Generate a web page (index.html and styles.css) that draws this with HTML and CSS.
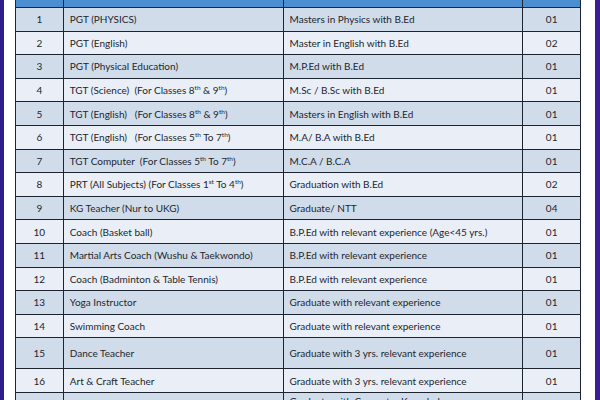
FILE: index.html
```html
<!DOCTYPE html>
<html>
<head>
<meta charset="utf-8">
<link rel="stylesheet" href="styles.css">
</head>
<body>
<div class="frame">
  <table class="posts">
    <colgroup>
      <col class="c-no"><col class="c-post"><col class="c-qual"><col class="c-num">
    </colgroup>
    <thead>
      <tr class="head"><th></th><th></th><th></th><th></th></tr>
    </thead>
    <tbody>
      <tr><td class="n">1</td><td>PGT (PHYSICS)</td><td>Masters in Physics with B.Ed</td><td class="n">01</td></tr>
      <tr><td class="n">2</td><td>PGT (English)</td><td>Master in English with B.Ed</td><td class="n">02</td></tr>
      <tr><td class="n">3</td><td>PGT (Physical Education)</td><td>M.P.Ed with B.Ed</td><td class="n">01</td></tr>
      <tr><td class="n">4</td><td>TGT (Science)&nbsp; (For Classes 8<sup>th</sup> &amp; 9<sup>th</sup>)</td><td>M.Sc / B.Sc with B.Ed</td><td class="n">01</td></tr>
      <tr><td class="n">5</td><td>TGT (English)&nbsp;&nbsp; (For Classes 8<sup>th</sup> &amp; 9<sup>th</sup>)</td><td>Masters in English with B.Ed</td><td class="n">01</td></tr>
      <tr><td class="n">6</td><td>TGT (English)&nbsp;&nbsp; (For Classes 5<sup>th</sup> To 7<sup>th</sup>)</td><td>M.A/ B.A with B.Ed</td><td class="n">01</td></tr>
      <tr><td class="n">7</td><td>TGT Computer&nbsp; (For Classes 5<sup>th</sup> To 7<sup>th</sup>)</td><td>M.C.A / B.C.A</td><td class="n">01</td></tr>
      <tr><td class="n">8</td><td>PRT (All Subjects) (For Classes 1<sup>st</sup> To 4<sup>th</sup>)</td><td>Graduation with B.Ed</td><td class="n">02</td></tr>
      <tr><td class="n">9</td><td>KG Teacher (Nur to UKG)</td><td>Graduate/ NTT</td><td class="n">04</td></tr>
      <tr><td class="n">10</td><td>Coach (Basket ball)</td><td>B.P.Ed with relevant experience (Age&lt;45 yrs.)</td><td class="n">01</td></tr>
      <tr><td class="n">11</td><td>Martial Arts Coach (Wushu &amp; Taekwondo)</td><td>B.P.Ed with relevant experience</td><td class="n">01</td></tr>
      <tr><td class="n">12</td><td>Coach (Badminton &amp; Table Tennis)</td><td>B.P.Ed with relevant experience</td><td class="n">01</td></tr>
      <tr><td class="n">13</td><td>Yoga Instructor</td><td>Graduate with relevant experience</td><td class="n">01</td></tr>
      <tr><td class="n">14</td><td>Swimming Coach</td><td>Graduate with relevant experience</td><td class="n">01</td></tr>
      <tr class="tall"><td class="n">15</td><td>Dance Teacher</td><td>Graduate with 3 yrs. relevant experience</td><td class="n">01</td></tr>
      <tr><td class="n">16</td><td>Art &amp; Craft Teacher</td><td>Graduate with 3 yrs. relevant experience</td><td class="n">01</td></tr>
      <tr class="last"><td class="n">17</td><td>Office Assistant</td><td class="top">Graduate with Computer Knowledge<br>and relevant experience</td><td class="n">01</td></tr>
    </tbody>
  </table>
</div>
</body>
</html>
```

FILE: styles.css
```css
html, body {
  margin: 0;
  padding: 0;
  background: #ffffff;
  overflow: hidden;
}
.frame {
  width: 600px;
  height: 400px;
  box-sizing: border-box;
  border-left: 4px solid #2f1b8c;
  border-right: 5px solid #3a1e92;
  padding: 0 10px 0 11px;
  overflow: hidden;
}
.posts {
  border-collapse: collapse;
  width: 566px;
  margin-top: -17px;
  font-family: Lato, "Open Sans", sans-serif;
  font-size: 10px;
  color: #22262d;
  border: 1px solid #1c2430;
}
.c-no { width: 48px; }
.c-post { width: 220px; }
.c-qual { width: 240px; }
.c-num { width: 58px; }
.posts th, .posts td {
  border: 1px solid #1c2430;
  padding: 0 0 0 6px;
  text-align: left;
  vertical-align: middle;
  white-space: nowrap;
}
.posts td.n {
  text-align: center;
  padding: 0;
}
.head th {
  height: 23px;
  background: #4b8fd3;
}
.posts tbody tr { height: 23.6px; }
.posts tbody tr:nth-child(odd) { background: #d1dcea; }
.posts tbody tr:nth-child(even) { background: #eaeff7; }
.posts tbody tr.tall { height: 31px; }
.posts tbody tr.last td { line-height: 14px; }
.posts tbody tr.last td.top { vertical-align: top; padding-top: 1px; }
.posts tbody tr.last td:not(.top) { vertical-align: top; padding-top: 22px; }
sup {
  font-size: 6.5px;
  line-height: 0;
  vertical-align: 4px;
}
```
